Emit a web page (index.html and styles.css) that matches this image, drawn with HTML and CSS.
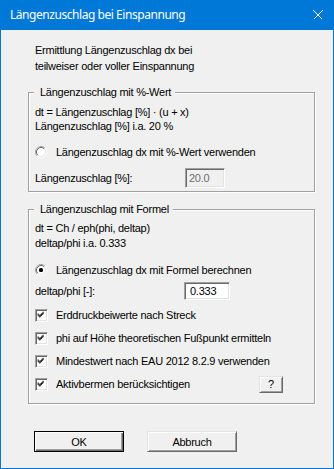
FILE: index.html
```html
<!DOCTYPE html>
<html lang="de">
<head>
<meta charset="utf-8">
<title>Längenzuschlag bei Einspannung</title>
<link rel="stylesheet" href="styles.css">
</head>
<body>
<div class="window">
  <div class="titlebar">
    <span class="title">Längenzuschlag bei Einspannung</span>
    <svg class="close" width="10" height="10" viewBox="0 0 10 10"><path d="M0.5 0.5L9.5 9.5M9.5 0.5L0.5 9.5" stroke="#fff" stroke-width="1" fill="none"/></svg>
  </div>
  <div class="client">
    <div class="intro">Ermittlung Längenzuschlag dx bei<br>teilweiser oder voller Einspannung</div>

    <div class="group g1">
      <span class="legend">Längenzuschlag mit %-Wert</span>
      <div class="line">dt = Längenzuschlag [%] · (u + x)</div>
      <div class="line l2a">Längenzuschlag [%] i.a. 20 %</div>
      <div class="opt r1">
        <svg class="radio" width="12" height="12" viewBox="0 0 12 12">
          <circle cx="6" cy="6" r="5" fill="#fff"/>
          <path d="M9.89 2.11A5.5 5.5 0 0 0 2.11 9.89" stroke="#a0a0a0" fill="none"/>
          <path d="M9.18 2.82A4.5 4.5 0 0 0 2.82 9.18" stroke="#696969" fill="none"/>
          <path d="M9.89 2.11A5.5 5.5 0 0 1 2.11 9.89" stroke="#fff" fill="none"/>
          <path d="M9.18 2.82A4.5 4.5 0 0 1 2.82 9.18" stroke="#e3e3e3" fill="none"/>
        </svg>
        <span>Längenzuschlag dx mit %-Wert verwenden</span>
      </div>
      <div class="field f1">
        <span class="flabel w150">Längenzuschlag [%]:</span>
        <span class="edit disabled e1">20.0</span>
      </div>
    </div>

    <div class="group g2">
      <span class="legend">Längenzuschlag mit Formel</span>
      <div class="line">dt = Ch / eph(phi, deltap)</div>
      <div class="line l2b">deltap/phi i.a. 0.333</div>
      <div class="opt r2">
        <svg class="radio" width="12" height="12" viewBox="0 0 12 12">
          <circle cx="6" cy="6" r="5" fill="#fff"/>
          <path d="M9.89 2.11A5.5 5.5 0 0 0 2.11 9.89" stroke="#a0a0a0" fill="none"/>
          <path d="M9.18 2.82A4.5 4.5 0 0 0 2.82 9.18" stroke="#696969" fill="none"/>
          <path d="M9.89 2.11A5.5 5.5 0 0 1 2.11 9.89" stroke="#fff" fill="none"/>
          <path d="M9.18 2.82A4.5 4.5 0 0 1 2.82 9.18" stroke="#e3e3e3" fill="none"/>
          <rect x="4" y="4" width="4" height="4" rx="1.5" fill="#000"/>
        </svg>
        <span>Längenzuschlag dx mit Formel berechnen</span>
      </div>
      <div class="field f2">
        <span class="flabel w149">deltap/phi [-]:</span>
        <span class="edit e2">0.333</span>
      </div>
      <div class="opt cb c1">
        <svg class="check" width="13" height="13" viewBox="0 0 13 13"><path d="M3.5 5v3M4.5 6v3M5.5 7v3M6.5 6v3M7.5 5v3M8.5 4v3M9.5 3v3" stroke="#000" fill="none"/></svg>
        <span>Erddruckbeiwerte nach Streck</span>
      </div>
      <div class="opt cb c2">
        <svg class="check" width="13" height="13" viewBox="0 0 13 13"><path d="M3.5 5v3M4.5 6v3M5.5 7v3M6.5 6v3M7.5 5v3M8.5 4v3M9.5 3v3" stroke="#000" fill="none"/></svg>
        <span>phi auf Höhe theoretischen Fußpunkt ermitteln</span>
      </div>
      <div class="opt cb c3">
        <svg class="check" width="13" height="13" viewBox="0 0 13 13"><path d="M3.5 5v3M4.5 6v3M5.5 7v3M6.5 6v3M7.5 5v3M8.5 4v3M9.5 3v3" stroke="#000" fill="none"/></svg>
        <span>Mindestwert nach EAU 2012 8.2.9 verwenden</span>
      </div>
      <div class="opt cb c4">
        <svg class="check" width="13" height="13" viewBox="0 0 13 13"><path d="M3.5 5v3M4.5 6v3M5.5 7v3M6.5 6v3M7.5 5v3M8.5 4v3M9.5 3v3" stroke="#000" fill="none"/></svg>
        <span>Aktivbermen berücksichtigen</span>
        <span class="btn help">?</span>
      </div>
    </div>

    <div class="buttons">
      <span class="btn big default">OK</span>
      <span class="btn big">Abbruch</span>
    </div>
  </div>
</div>
</body>
</html>
```
FILE: styles.css
```css
html, body {
  margin: 0;
  padding: 0;
}
body {
  width: 334px;
  height: 469px;
  overflow: hidden;
  background: #f0f0f0;
  font-family: "Liberation Sans", Arial, sans-serif;
  font-size: 11px;
  letter-spacing: -0.25px;
  color: #000;
}
.window {
  box-sizing: border-box;
  width: 334px;
  height: 469px;
  border: 1px solid #0078d7;
  border-top: 0;
  display: flex;
  flex-direction: column;
  background: #f0f0f0;
}
.titlebar {
  height: 30px;
  margin: 0 -1px;
  flex: none;
  background: #0078d7;
  display: flex;
  align-items: center;
  justify-content: space-between;
  padding: 0 11px 0 10px;
  color: #fff;
}
.title {
  font-family: "Noto Sans", "Open Sans", sans-serif;
  font-size: 12px;
  letter-spacing: -0.45px;
  line-height: 16px;
  padding-bottom: 1px;
}
.close {
  display: block;
  shape-rendering: crispEdges;
}
.client {
  flex: 1;
  padding: 12px 0 0 27px;
}
.intro {
  line-height: 16px;
  padding-left: 7px;
}
.group {
  position: relative;
  box-sizing: border-box;
  width: 287px;
  border: 1px solid #a0a0a0;
  box-shadow: 1px 1px 0 #fff, inset 1px 1px 0 #fff;
  padding-left: 6px;
}
.g1 {
  margin-top: 18px;
  height: 100px;
  padding-top: 13px;
}
.g2 {
  margin-top: 17px;
  height: 195px;
  padding-top: 12px;
}
.legend {
  position: absolute;
  top: -7px;
  left: 5px;
  padding: 0 4px 0 6px;
  background: #f0f0f0;
  line-height: 13px;
}
.line {
  line-height: 13px;
}
.l2a {
  margin-top: 1px;
}
.l2b {
  margin-top: 2px;
}
.opt {
  display: flex;
  align-items: center;
  height: 16px;
  line-height: 13px;
}
.radio {
  display: block;
  flex: none;
  margin-right: 9px;
}
.r1 { margin-top: 11px; }
.r2 { margin-top: 12px; }
.cb { height: 13px; }
.check {
  display: block;
  flex: none;
  box-sizing: border-box;
  width: 13px;
  height: 13px;
  margin-right: 8px;
  background: #fff;
  border: 1px solid;
  border-color: #a0a0a0 #fff #fff #a0a0a0;
  box-shadow: inset 1px 1px 0 #696969, inset -1px -1px 0 #e3e3e3;
  overflow: visible;
}
.check path {
  transform: translate(-1px, -1px);
}
.c1 { margin-top: 9px; }
.c2 { margin-top: 10px; }
.c3 { margin-top: 10px; }
.c4 { margin-top: 8px; height: 17px; }
.field {
  display: flex;
  align-items: center;
}
.f1 { margin-top: 8px; height: 20px; }
.f2 { margin-top: 4px; height: 18px; }
.flabel { flex: none; line-height: 13px; }
.w150 { width: 150px; }
.w149 { width: 149px; }
.edit {
  box-sizing: border-box;
  display: flex;
  align-items: center;
  height: 100%;
  padding-left: 3px;
  background: #fff;
  border: 1px solid;
  border-color: #a0a0a0 #fff #fff #a0a0a0;
  box-shadow: inset 1px 1px 0 #696969, inset -1px -1px 0 #e3e3e3;
}
.e1 { width: 40px; }
.e2 { width: 46px; padding-left: 5px; }
.disabled {
  background: #f0f0f0;
  color: #6d6d6d;
}
.btn {
  box-sizing: border-box;
  display: flex;
  align-items: center;
  justify-content: center;
  background: #f0f0f0;
  border: 1px solid;
  border-color: #e3e3e3 #696969 #696969 #e3e3e3;
  box-shadow: inset 1px 1px 0 #fff, inset -1px -1px 0 #a0a0a0;
}
.help {
  width: 24px;
  height: 17px;
  margin-left: auto;
  margin-right: 31px;
}
.buttons {
  display: flex;
  gap: 23px;
  margin: 27px 0 0 6px;
}
.big {
  width: 90px;
  height: 21px;
}
.default {
  border-color: #000;
  box-shadow: inset 1px 1px 0 #fff, inset -1px -1px 0 #696969, inset -2px -2px 0 #a0a0a0;
}
```
